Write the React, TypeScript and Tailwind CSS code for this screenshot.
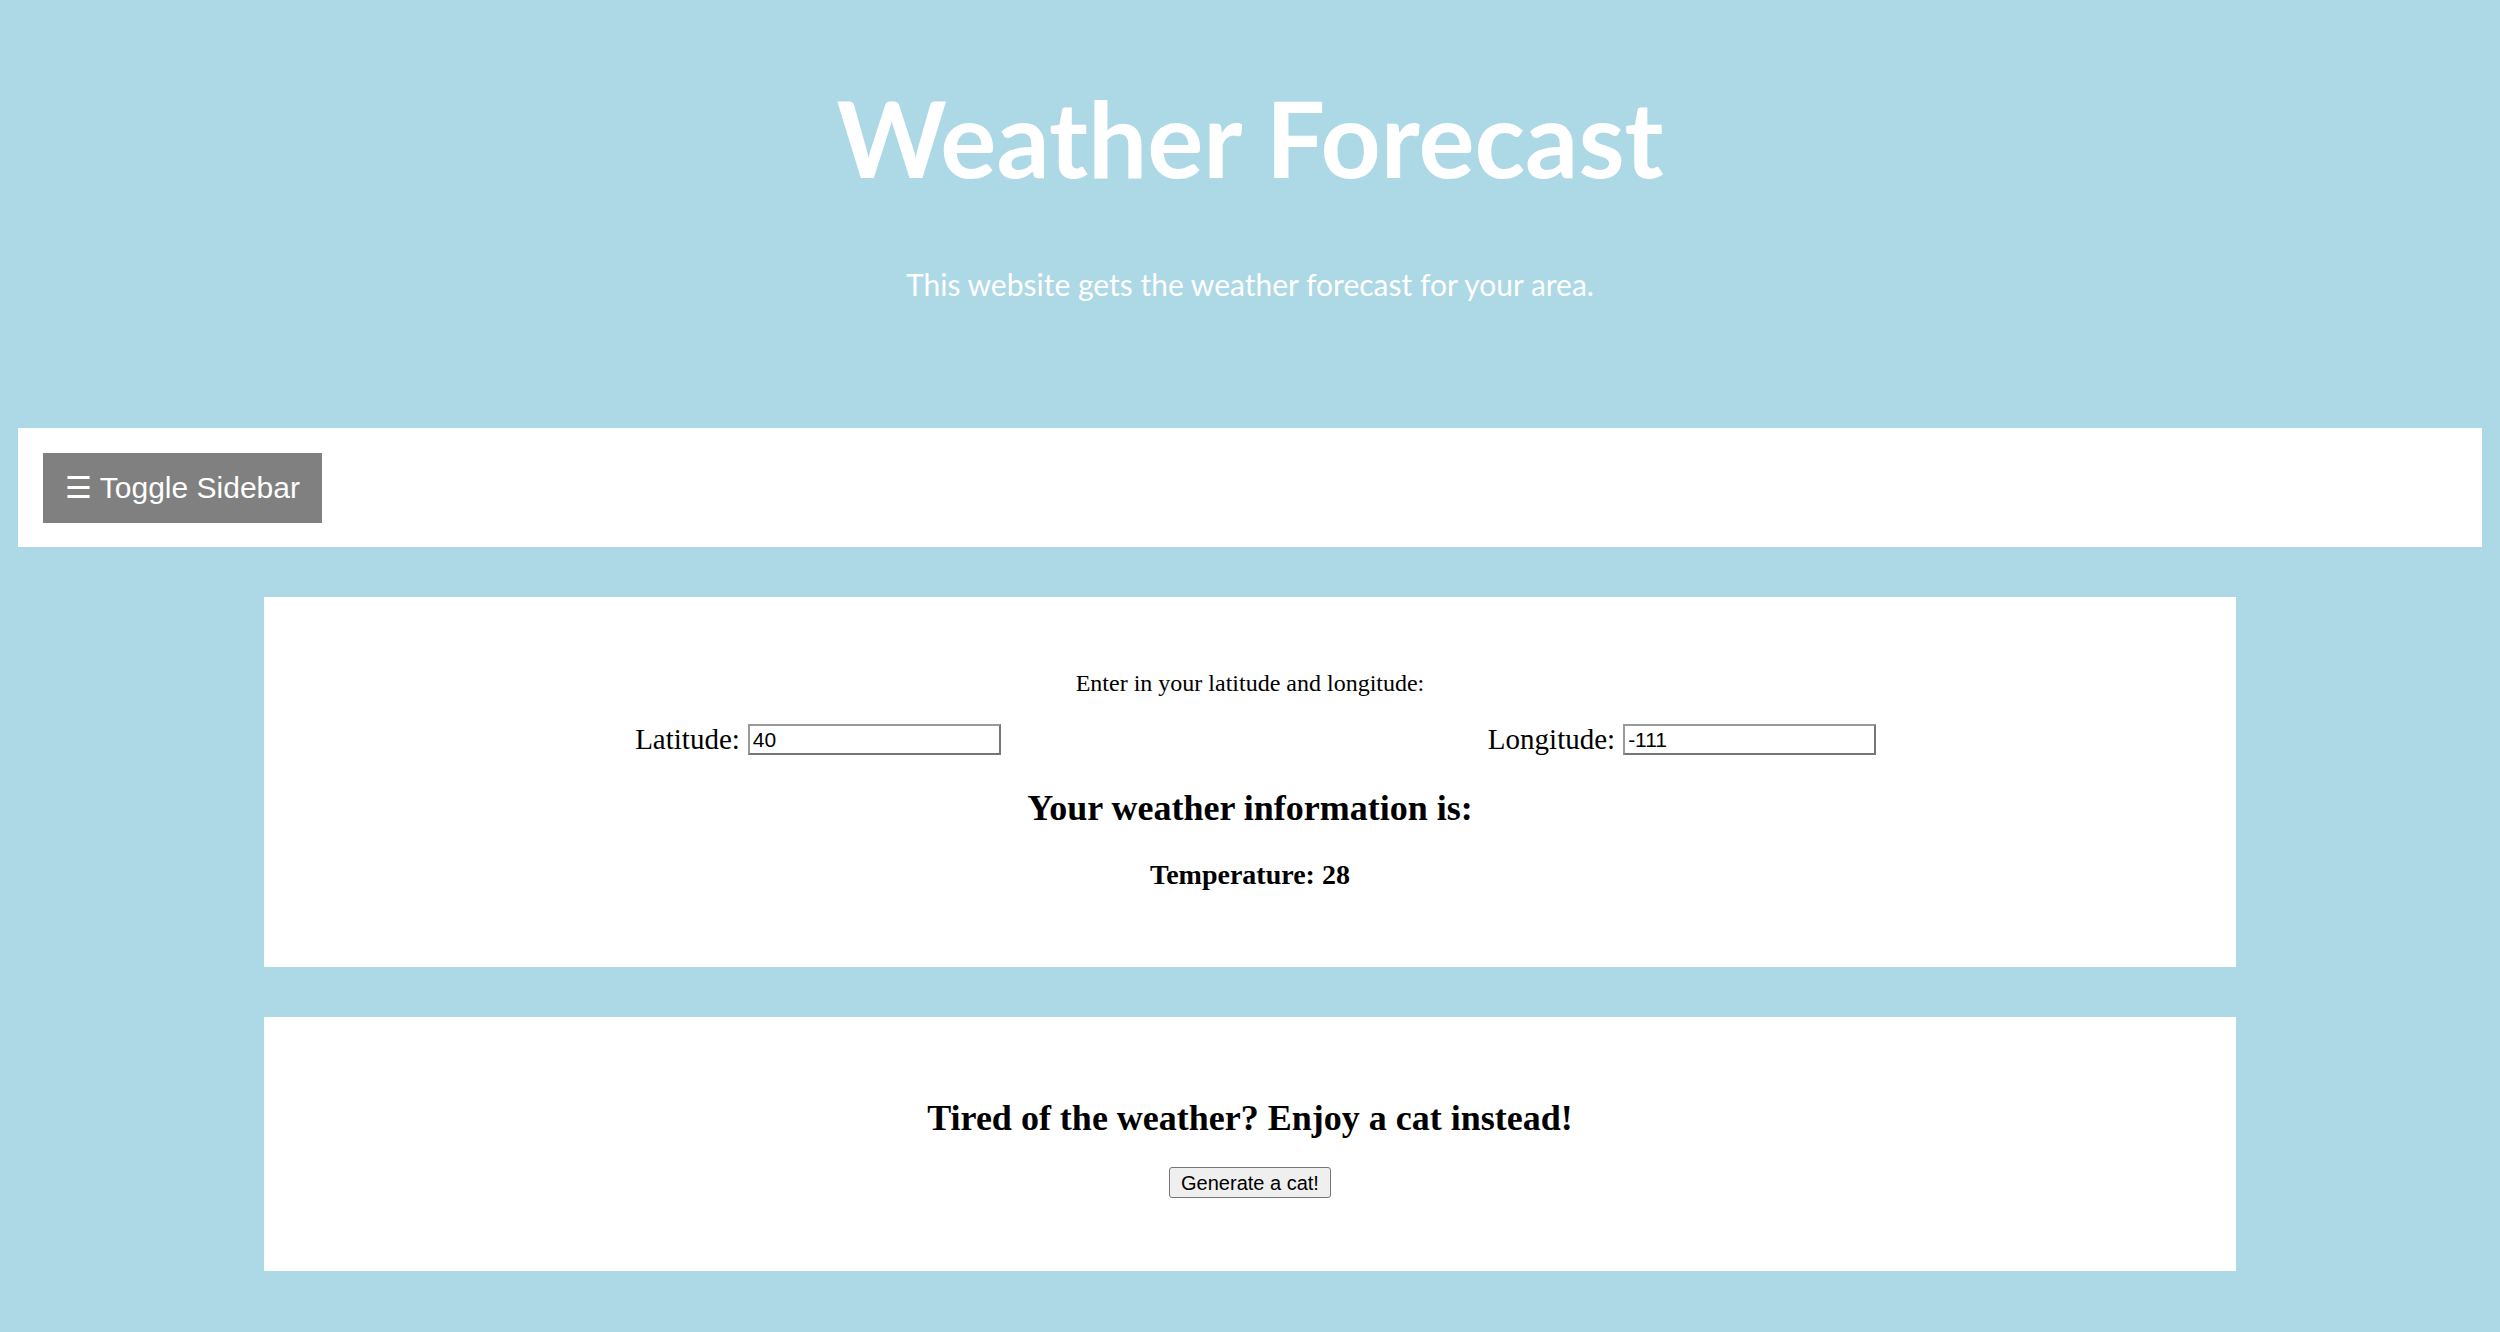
import { useState } from 'react'

function WeatherCard() {
  const [lat, setLat] = useState('40')
  const [lon, setLon] = useState('-111')

  return (
    <section className="bg-white h-[370px] pt-[74px] text-black font-['Liberation_Serif',serif]">
      <p className="text-center text-[24px] leading-none">Enter in your latitude and longitude:</p>
      <div className="grid grid-cols-2 px-[122px] mt-[29px] h-[31px]">
        <label className="flex items-center justify-center text-[29px] leading-none">
          Latitude:
          <input
            value={lat}
            onChange={(e) => setLat(e.target.value)}
            className="ml-[8px] w-[253px] h-[31px] border-2 border-[#767676] border-t-[#9a9a9a] border-l-[#9a9a9a] px-[3px] text-[21px] font-['Liberation_Sans',sans-serif] outline-none"
          />
        </label>
        <label className="flex items-center justify-center text-[29px] leading-none">
          Longitude:
          <input
            value={lon}
            onChange={(e) => setLon(e.target.value)}
            className="ml-[8px] w-[253px] h-[31px] border-2 border-[#767676] border-t-[#9a9a9a] border-l-[#9a9a9a] px-[3px] text-[21px] font-['Liberation_Sans',sans-serif] outline-none"
          />
        </label>
      </div>
      <h3 className="mt-[35px] text-center text-[36px] leading-none font-bold">Your weather information is:</h3>
      <h4 className="mt-[35px] text-center text-[28px] leading-none font-bold">Temperature: 28</h4>
    </section>
  )
}

function CatCard() {
  return (
    <section className="mt-[50px] bg-white h-[254px] pt-[83px] flex flex-col items-center font-['Liberation_Serif',serif] text-black">
      <h2 className="text-[36px] leading-none font-bold">Tired of the weather? Enjoy a cat instead!</h2>
      <button className="mt-[31px] h-[31px] px-[11px] bg-[#efefef] border border-[#767676] rounded-[3px] text-[20px] leading-none font-['Liberation_Sans',sans-serif] text-black">
        Generate a cat!
      </button>
    </section>
  )
}

export default function App() {
  return (
    <div className="min-h-screen bg-[#add8e6] pb-[63px]">
      <header className="text-center text-white font-['Lato','Open_Sans',sans-serif] pt-[85px]">
        <h1 className="text-[105px] leading-[105px] font-bold">Weather Forecast</h1>
        <p className="mt-[79px] text-[30px] leading-[30px]">This website gets the weather forecast for your area.</p>
      </header>

      <nav className="mx-[18px] mt-[129px] bg-white pl-[25px] pt-[25px] pb-[24px]">
        <button className="h-[70px] px-[22px] bg-[#808080] text-white text-[30px] leading-none font-['Liberation_Sans',sans-serif]">
          ☰ Toggle Sidebar
        </button>
      </nav>

      <main className="mx-[264px] mt-[50px]">
        <WeatherCard />
        <CatCard />
      </main>
    </div>
  )
}
